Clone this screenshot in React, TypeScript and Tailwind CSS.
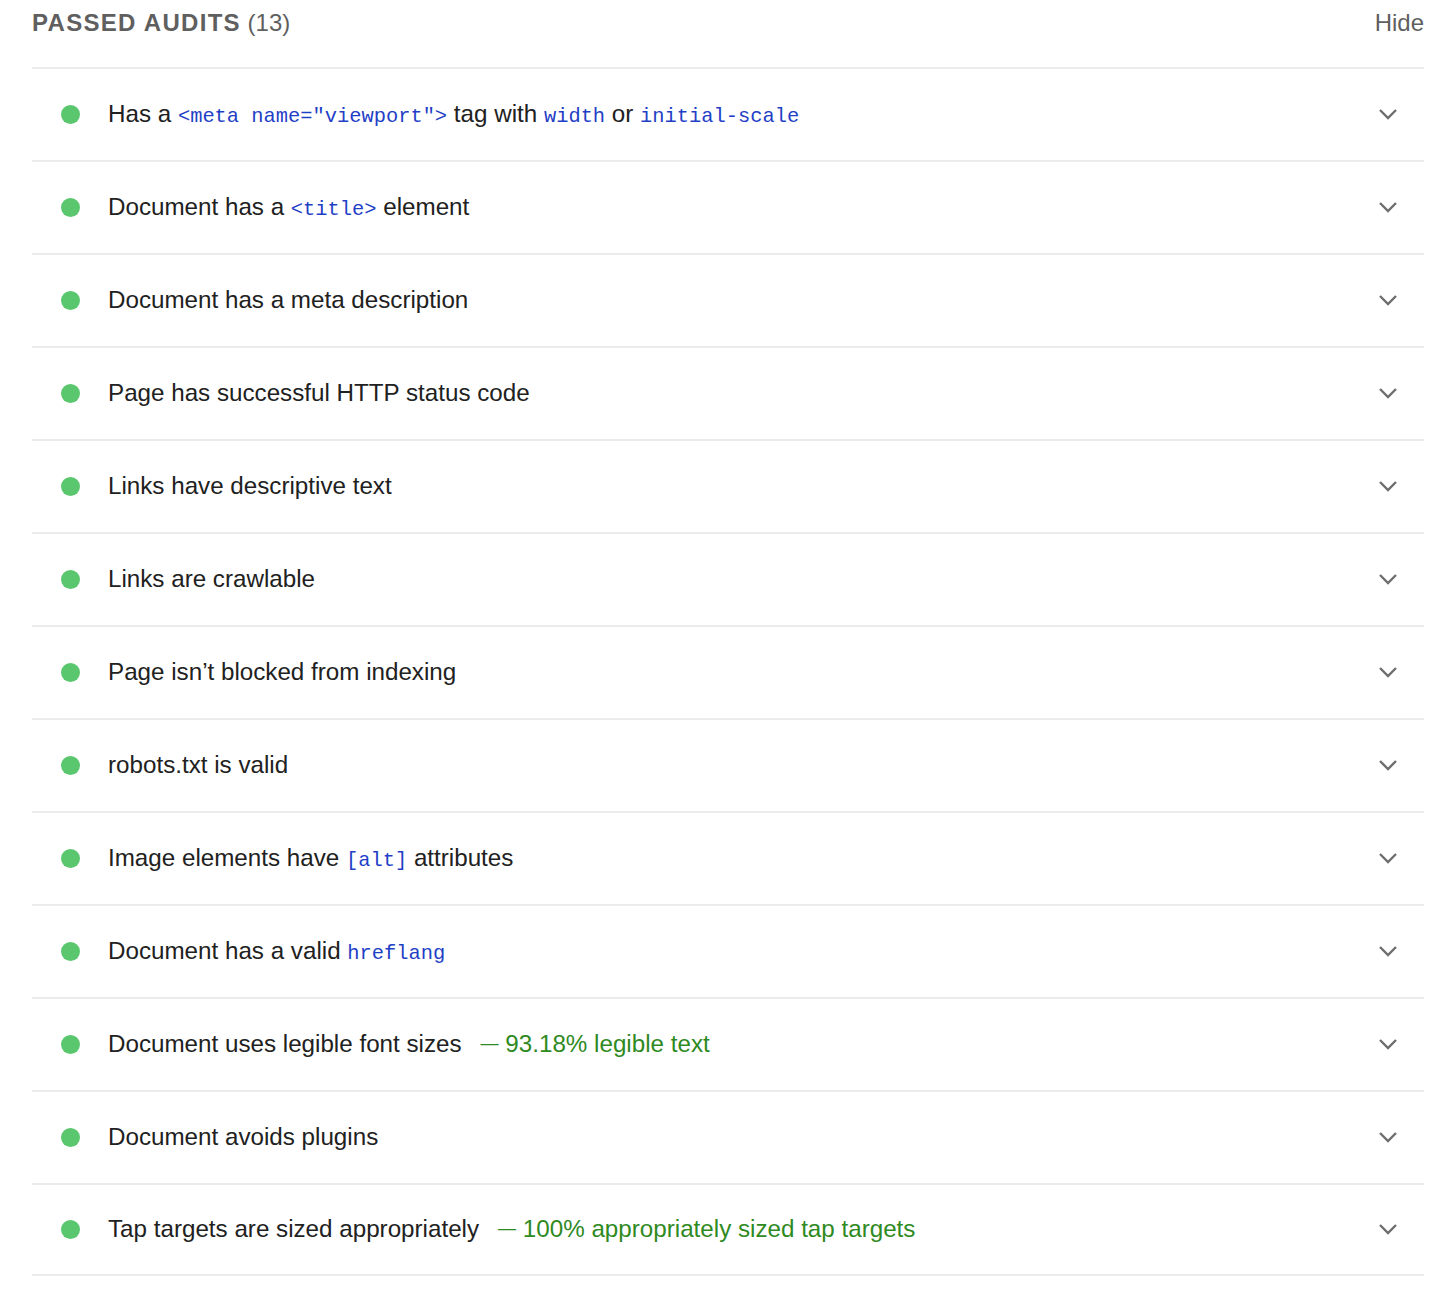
type Part = { text: string; code?: boolean };

interface Audit {
  title: Part[];
  display?: string;
}

const audits: Audit[] = [
  {
    title: [
      { text: 'Has a ' },
      { text: '<meta name="viewport">', code: true },
      { text: ' tag with ' },
      { text: 'width', code: true },
      { text: ' or ' },
      { text: 'initial-scale', code: true },
    ],
  },
  { title: [{ text: 'Document has a ' }, { text: '<title>', code: true }, { text: ' element' }] },
  { title: [{ text: 'Document has a meta description' }] },
  { title: [{ text: 'Page has successful HTTP status code' }] },
  { title: [{ text: 'Links have descriptive text' }] },
  { title: [{ text: 'Links are crawlable' }] },
  { title: [{ text: 'Page isn\u2019t blocked from indexing' }] },
  { title: [{ text: 'robots.txt is valid' }] },
  { title: [{ text: 'Image elements have ' }, { text: '[alt]', code: true }, { text: ' attributes' }] },
  { title: [{ text: 'Document has a valid ' }, { text: 'hreflang', code: true }] },
  { title: [{ text: 'Document uses legible font sizes' }], display: '93.18% legible text' },
  { title: [{ text: 'Document avoids plugins' }] },
  { title: [{ text: 'Tap targets are sized appropriately' }], display: '100% appropriately sized tap targets' },
];

const Chevron = () => (
  <svg width="20" height="12" viewBox="0 0 20 12" className="mr-[26px] shrink-0 mb-[2px]">
    <polyline points="2,2 10,10 18,2" fill="none" stroke="#6e6e6e" strokeWidth="2.4" />
  </svg>
);

const AuditRow = ({ audit, last }: { audit: Audit; last: boolean }) => (
  <div className={`flex items-center h-[93px] border-t-2 border-[#ebebeb] ${last ? 'border-b-2' : ''}`}>
    <div className="w-[19px] h-[19px] rounded-full bg-[#5ac66e] ml-[29px] shrink-0" />
    <div className="ml-[28px] flex-1 text-[24.2px] text-[#212121] whitespace-pre">
      {audit.title.map((p, i) =>
        p.code ? (
          <code key={i} className="font-['Liberation_Mono',monospace] text-[20.4px] text-[#1f3fc6]">
            {p.text}
          </code>
        ) : (
          <span key={i}>{p.text}</span>
        )
      )}
      {audit.display && (
        <span className="text-[#2f8a1f] ml-[19px]">
          <span className="inline-block text-[18px] align-middle -translate-y-[2px]">{'\u2014'}</span>
          {' ' + audit.display}
        </span>
      )}
    </div>
    <Chevron />
  </div>
);

const App = () => {
  return (
    <div className="bg-white min-h-[1290px] pl-[32px] pr-[26px] font-['Liberation_Sans',Arial,sans-serif]">
      <div className="flex justify-between items-start h-[67px] pt-[5px] text-[24px] text-[#5f5f5f]">
        <div>
          <span className="font-bold tracking-[1.3px]">PASSED AUDITS</span>
          <span> (13)</span>
        </div>
        <button>Hide</button>
      </div>
      <div>
        {audits.map((a, i) => (
          <AuditRow key={i} audit={a} last={i === audits.length - 1} />
        ))}
      </div>
    </div>
  );
};

export default App;
